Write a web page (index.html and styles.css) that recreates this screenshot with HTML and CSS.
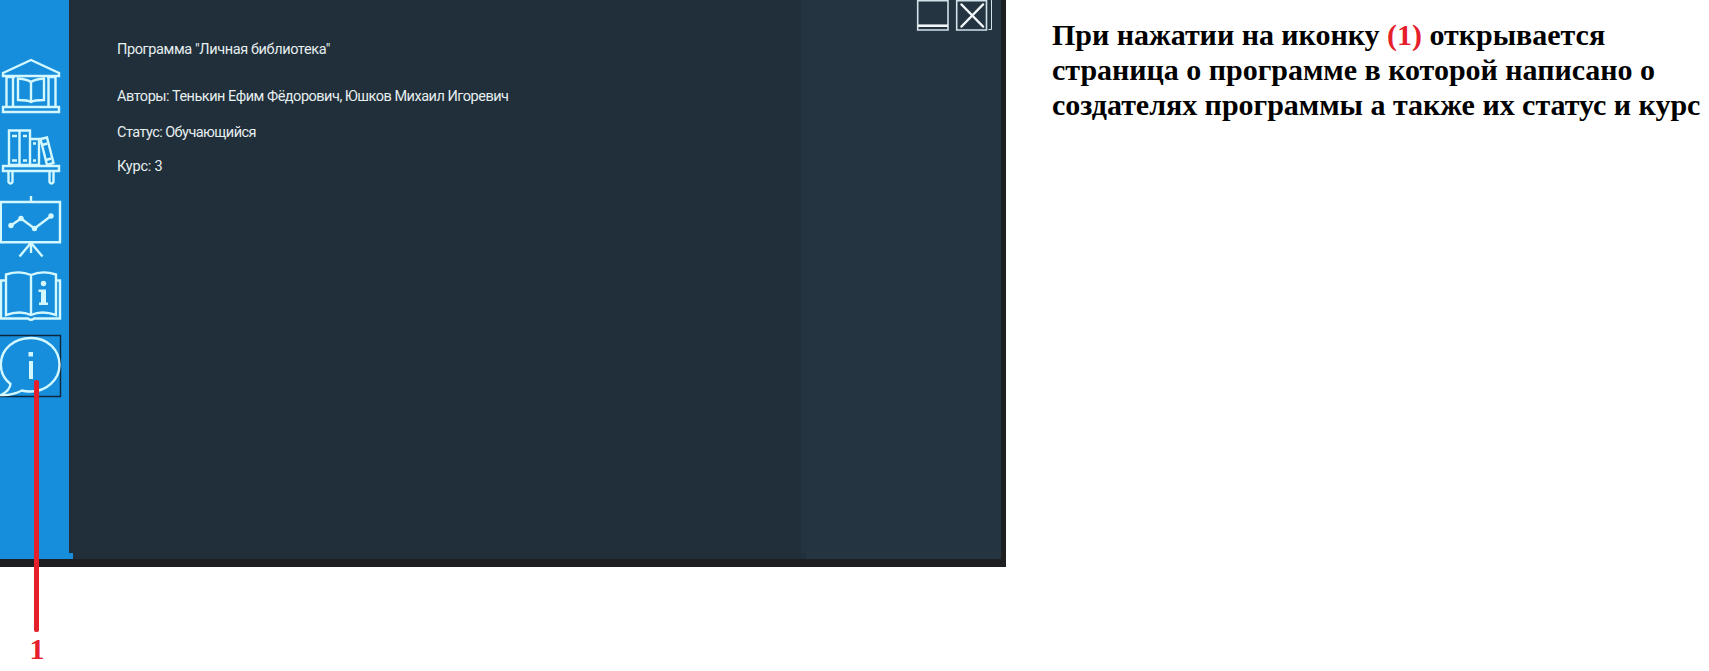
FILE: index.html
```html
<!DOCTYPE html>
<html lang="ru">
<head>
<meta charset="utf-8">
<title>О программе</title>
<link rel="stylesheet" href="styles.css">
</head>
<body>
<main class="page">
  <section class="window">
    <nav class="sidebar">
      <svg class="icon icon-library" viewBox="0 54 64 64">
        <path d="M3 73 31 60 59 73V76H3Z"/>
        <path d="M6.500 77V107M13 77V107M48.500 77V107M55.500 77V107M3 107H59V112H3ZM6 77H15M47 77H56"/>
        <path d="M18 78.500C23 79 28 79.500 31 82 34 79.500 39 79 44 78.500V100C39 100 34 100 31 102 28 100 23 100 18 100ZM31 82V102"/>
      </svg>
      <svg class="icon icon-shelf" viewBox="0 126 64 62">
        <path d="M9 130.500H19.500V165H9ZM19.500 130.500H30V165H19.500ZM30 139H39V165H30ZM40.500 139 47 137.500 53.500 163 47 165Z"/>
        <path d="M12 136H17M12 160.500H17M23 136H27M23 160.500H27M33 143.500H36M33 160.500H36M42 145 47.500 143.500M46 160 51 158.500"/>
        <path d="M3 166H59V171H3ZM8.500 171V182Q10.500 185 12.500 182V171M49.500 171V182Q51.500 185 53.500 182V171"/>
      </svg>
      <svg class="icon icon-chart" viewBox="0 194 64 66">
        <path d="M31 196V202M.8 202H60V242.300H.8ZM31 243V253M30 244 19.500 256.500M32 244 42.500 256.500"/>
        <path d="M11 225.500 21 218.500 34.500 228.500 51 216"/>
        <g class="dots"><circle cx="11" cy="225.500" r="2.700"/><circle cx="21" cy="218.500" r="2.700"/><circle cx="34.500" cy="228.500" r="2.700"/><circle cx="51" cy="216" r="2.700"/></g>
      </svg>
      <svg class="icon icon-manual" viewBox="0 268 64 56">
        <path d="M6 274.500Q20 270 31 275 42 270 56 274.500V315Q42 310 31 315 20 310 6 315ZM31 275V315"/>
        <path d="M5 280.500H1V318.500H28Q31 321 34 318.500H60V280.500H57"/>
        <g class="dots"><circle cx="43.500" cy="283.500" r="2.700"/><path d="M38.500 289.500H46V302.500H48V305H39V302.500H41V292H38.500Z"/></g>
      </svg>
      <svg class="icon icon-about" viewBox="0 334 64 64">
        <path class="focus" d="M-1 335.500H60.500V396.500H-1"/>
        <path d="M10.500 384C4 379 .8 373 .8 364.500 1 349 14 338 31 338S59.500 350 59.500 365 46 391.500 31 391.500C27 391.500 24 391.200 22 390.500 15 394 8 395.500 1 395 7 392 10 389 10.500 384Z"/>
        <g class="dots"><path d="M28.500 352H33V356.500H28.500ZM29 361H33V379H29Z"/></g>
      </svg>
    </nav>
    <article class="about">
      <p class="line title">Программа "Личная библиотека"</p>
      <p class="line authors">Авторы: Тенькин Ефим Фёдорович, Юшков Михаил Игоревич</p>
      <p class="line status">Статус: Обучающийся</p>
      <p class="line course">Курс: 3</p>
    </article>
    <aside class="side">
      <svg class="controls" viewBox="914 0 80 32">
        <path d="M917.700 0V30H948V0M917.700 .7H948"/>
        <path class="bar" d="M918 25.700H948"/>
        <path d="M956.700 0V30H986.500V0M956.700 .7H986.500"/>
        <path class="cross" d="M961.500 4.500 983 26.500M983 4.500 961.500 26.500"/>
        <path class="thin" d="M988.500 29.500H991.500V0"/>
      </svg>
    </aside>
  </section>
  <p class="caption">При нажатии на иконку <span class="ref">(1)</span> открывается<br>страница о программе в которой написано о<br>создателях программы а также их статус и курс</p>
  <div class="callout"></div>
  <div class="callout-number">1</div>
</main>
</body>
</html>
```
FILE: styles.css
```css
body { margin: 0; background: #fff; }
p { margin: 0; }
.page { position: relative; display: flex; width: 1709px; height: 671px; overflow: hidden; }
.window {
  box-sizing: border-box; display: flex; flex: none;
  width: 1006px; height: 567px;
  border-right: 5px solid #1e1f21; border-bottom: 8px solid #1e1f21;
  background: #202f39;
}
.sidebar { position: relative; display: flex; flex-direction: column; width: 68.5px; padding-top: 54px; box-sizing: border-box; background: #168edb; }
.sidebar::after { content: ""; position: absolute; left: 68px; bottom: 0; width: 5px; height: 6px; background: #168edb; }
.icon { display: block; width: 64px; fill: none; stroke: #d3f8ff; stroke-width: 2.4; }
.icon-library { height: 64px; margin-bottom: 8px; }
.icon-shelf { height: 62px; margin-bottom: 6px; }
.icon-chart { height: 66px; margin-bottom: 8px; }
.icon-manual { height: 56px; margin-bottom: 10px; }
.icon-about { height: 64px; }
.dots { fill: #d3f8ff; stroke: none; }
.icon .focus { stroke: #10283d; stroke-width: 1.4; }
.about { width: 732.5px; padding: 40px 0 0 48.5px; box-sizing: border-box; color: #e6eef0; font: 14.5px/20px Roboto, "Liberation Sans", sans-serif; }
.line { white-space: nowrap; }
.title { margin-bottom: 27px; letter-spacing: -.38px; }
.authors { margin-bottom: 16px; letter-spacing: -.49px; }
.status { margin-bottom: 14px; letter-spacing: -.55px; }
.course { letter-spacing: -.2px; }
.side { position: relative; display: flex; justify-content: flex-end; align-items: flex-start; width: 200px; background: #243440; }
.side::after { content: ""; position: absolute; left: 0; bottom: 0; width: 5px; height: 6px; background: #21313b; }
.controls { width: 80px; height: 32px; margin-right: 7px; fill: none; stroke: #d3e2e9; stroke-width: 1.6; }
.controls .bar { stroke: #f2f8fa; stroke-width: 2.6; }
.controls .cross { stroke: #f2f8fa; stroke-width: 2.5; stroke-linecap: round; }
.controls .thin { stroke-width: 1; }
.caption { padding: 17px 0 0 46px; color: #000; font: bold 30px/35px "Liberation Serif", serif; letter-spacing: -.02px; white-space: nowrap; }
.ref { color: #e5202b; }
.callout { position: absolute; left: 34px; top: 380px; width: 5px; height: 252px; border-radius: 2px; background: #e5202b; }
.callout-number { position: absolute; left: 29.5px; top: 631px; color: #e5202b; font: bold 30px/35px "Liberation Serif", serif; }
```
